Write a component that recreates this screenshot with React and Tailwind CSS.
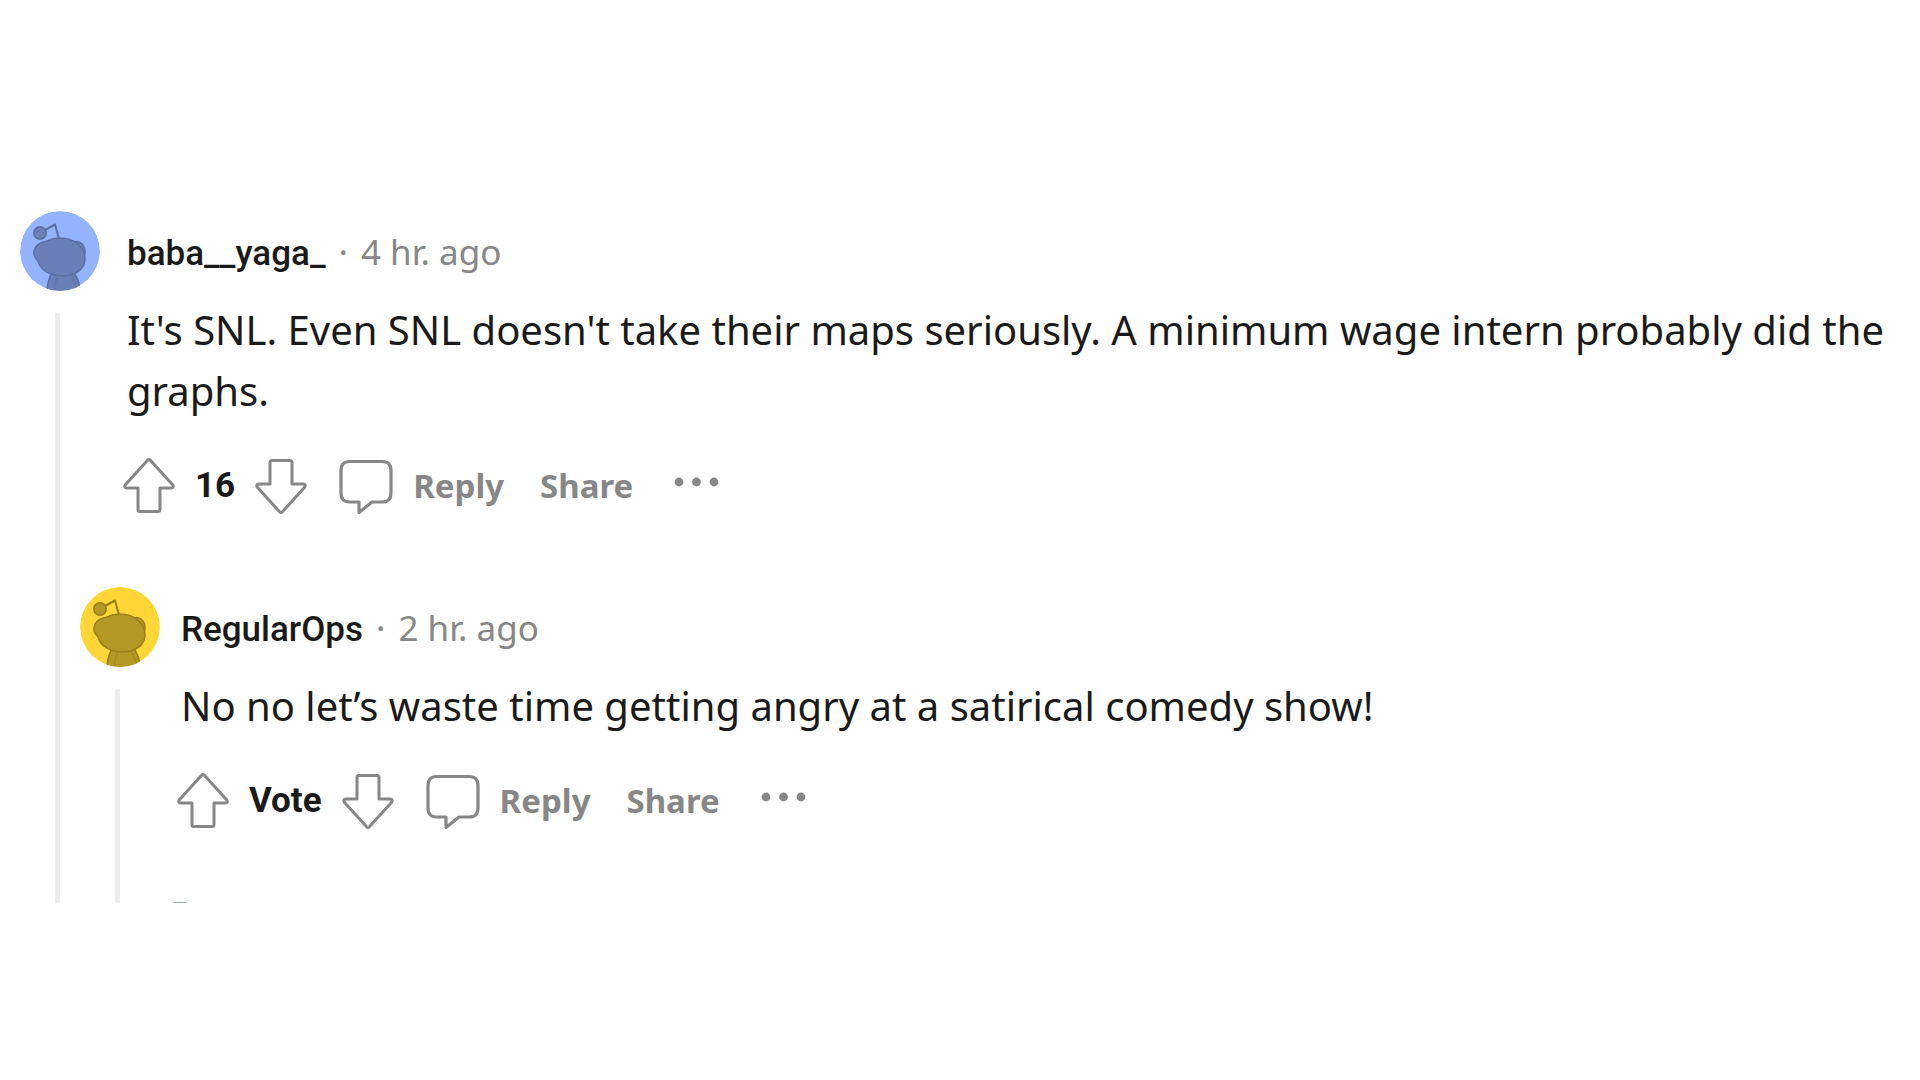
const comments = {
  author: "baba__yaga_",
  time: "4 hr. ago",
  text: "It's SNL. Even SNL doesn't take their maps seriously. A minimum wage intern probably did the graphs.",
  votes: "16",
  color: "#94b3ff",
  shade: "#697fb5",
  line: "#5a6fa3",
  replies: [
    {
      author: "RegularOps",
      time: "2 hr. ago",
      text: "No no let’s waste time getting angry at a satirical comedy show!",
      votes: "Vote",
      color: "#ffd635",
      shade: "#b49826",
      line: "#987d1c",
      replies: [],
    },
  ],
};

function Avatar({ color, shade, line }) {
  return (
    <svg viewBox="0 0 80 80" className="h-20 w-20 shrink-0 rounded-full" aria-hidden="true">
      <circle cx="40" cy="40" r="40" fill={color} />
      <g fill={shade} stroke={line} strokeWidth="1.5" strokeLinejoin="round" strokeLinecap="round">
        <path d="M39 28 L35 13.5 L25 19" fill="none" strokeWidth="2" />
        <circle cx="20" cy="22" r="6.2" />
        <path d="M27 82 C27 74 29 67 32 62 H54 C58 67 60 74 60 82 Z" />
        <path d="M35 82 C34 76 35 71 37 67 M57 82 C57 76 55 71 52 66" fill="none" strokeOpacity=".5" />
        <path d="M53 31 C59 29 65 33 65 41 C65 44 64 46 63 47 Z" />
        <path d="M27 30 C35 26 47 26 55 31 C61 35 65 41 65 48 C65 59 54 65 42 65 C29 65 20 58 18 50 C14 46 13 41 15 37 C17 33 22 31 27 30 Z" />
      </g>
    </svg>
  );
}

function ArrowIcon({ down }) {
  return (
    <svg
      viewBox="0 0 52 56"
      className={down ? "h-14 w-[52px] rotate-180" : "h-14 w-[52px]"}
      fill="none"
      stroke="currentColor"
      strokeWidth="3"
      strokeLinejoin="round"
      aria-hidden="true"
    >
      <path d="M24.4 2.4 Q26 .9 27.6 2.4 L49.4 26.4 Q51.6 29.8 48 30 H37 V51.5 Q37 53.6 35 53.6 H17 Q15 53.6 15 51.5 V30 H4 Q.4 29.8 2.6 26.4 Z" />
    </svg>
  );
}

function CommentIcon() {
  return (
    <svg
      viewBox="0 0 54 56"
      className="h-14 w-[54px]"
      fill="none"
      stroke="currentColor"
      strokeWidth="3.2"
      strokeLinejoin="round"
      aria-hidden="true"
    >
      <path d="M10.5 3.5 H43 Q52 3.5 52 12.5 V35 Q52 44 43 44 H33 L20 54.5 V44 H10.5 Q2 44 2 35 V12.5 Q2 3.5 10.5 3.5 Z" />
    </svg>
  );
}

function Actions({ votes }) {
  return (
    <div className="mt-[37px] -ml-1 flex items-center text-[33px] leading-[56px] font-bold text-[#878787]">
      <button aria-label="Upvote">
        <ArrowIcon />
      </button>
      <span className="mx-5 font-['Roboto',sans-serif] text-[35px] text-[#1a1a1b]">{votes}</span>
      <button aria-label="Downvote">
        <ArrowIcon down />
      </button>
      <button className="ml-8 flex items-center gap-5">
        <CommentIcon />
        Reply
      </button>
      <button className="ml-9">Share</button>
      <button className="ml-10" aria-label="More options">
        <svg viewBox="0 0 48 56" className="h-14 w-12" fill="currentColor" aria-hidden="true">
          <circle cx="6" cy="24" r="4.4" />
          <circle cx="23.5" cy="24" r="4.4" />
          <circle cx="41" cy="24" r="4.4" />
        </svg>
      </button>
    </div>
  );
}

function Comment({ comment, nested }) {
  return (
    <article>
      <header className={nested ? "flex items-center gap-[21px]" : "flex items-center gap-[27px]"}>
        <Avatar color={comment.color} shade={comment.shade} line={comment.line} />
        <div className="flex items-baseline pt-[3px] text-[35px] leading-[56px]">
          <a href="#" className="font-['Roboto',sans-serif] font-medium text-[#1a1a1b]">
            {comment.author}
          </a>
          <span className="px-[13px] text-[#878787]">·</span>
          <span className="text-[#878787]">{comment.time}</span>
        </div>
      </header>
      <div className="flex">
        <div className="mt-[22px] ml-[35px] w-[5px] shrink-0 bg-[#ededed]" />
        <div className="min-w-0 flex-1 pt-2">
          <div className={nested ? "pl-[61px]" : "pl-[67px]"}>
            <p className="text-[40px] leading-[61px] text-[#1a1a1b]">{comment.text}</p>
            <Actions votes={comment.votes} />
          </div>
          <div className="mt-[73px] pl-5">
            {comment.replies.map((reply) => (
              <Comment key={reply.author} comment={reply} nested />
            ))}
            {/* top edge of the next reply, cut off by the end of the thread */}
            {comment.replies.length === 0 && (
              <div className="h-px overflow-hidden">
                <div className="h-20 w-20 rounded-full bg-[#8a9a9a]" />
              </div>
            )}
          </div>
        </div>
      </div>
    </article>
  );
}

export default function App() {
  return (
    <main className="min-h-screen bg-white pt-[211px] pr-6 pl-5 font-['Noto_Sans',sans-serif]">
      <Comment comment={comments} />
    </main>
  );
}
